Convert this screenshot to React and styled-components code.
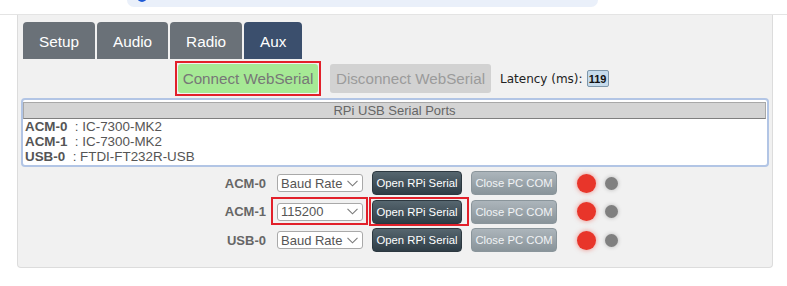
import React from "react";
import styled, { createGlobalStyle, css } from "styled-components";

const Global = createGlobalStyle`
  html, body { margin: 0; padding: 0; background: #ffffff; }
  body { font-family: "Liberation Sans", Arial, Helvetica, sans-serif; }
  * { box-sizing: border-box; }
`;

const TopStrip = styled.div`
  height: 15px;
  border-bottom: 1px solid #e4e4e4;
  display: flex;
`;

const SearchBar = styled.div`
  margin-left: 127px;
  width: 471px;
  height: 7px;
  background: #eaf0fa;
  border-radius: 0 0 14px 14px;
  display: flex;
  overflow: hidden;
`;

const SearchDot = styled.div`
  margin: -8px 0 0 10px;
  width: 10px;
  height: 10px;
  border-radius: 50%;
  background: #1f5bd6;
`;

const Panel = styled.div`
  margin-left: 17px;
  width: 756px;
  height: 253px;
  background: #f1f1f1;
  border: 1px solid #dcdcdc;
  border-top: 0;
  border-radius: 0 0 4px 4px;
  padding: 7px 4px 0 4px;
`;

const Tabs = styled.div`
  display: flex;
  gap: 2px;
  padding-left: 1px;
`;

const Tab = styled.div`
  height: 37px;
  padding: 2px 16px 0;
  display: flex;
  align-items: center;
  font-size: 15.3px;
  color: #ffffff;
  background: ${(p) => (p.$active ? "#3b4f6d" : "#6a7178")};
  border-radius: 4px 4px 0 0;
`;

const ConnectRow = styled.div`
  margin-top: 5px;
  padding-left: 156px;
  display: flex;
  align-items: center;
  height: 29px;
`;

const Annot = styled.span`
  position: relative;
  display: inline-flex;
  &::after {
    content: "";
    position: absolute;
    top: ${(p) => -p.$t}px;
    right: ${(p) => -p.$r}px;
    bottom: ${(p) => -p.$b}px;
    left: ${(p) => -p.$l}px;
    border: 2px solid #e2202a;
    pointer-events: none;
  }
`;

const WebButton = styled.div`
  height: 29px;
  padding: 0 4px;
  display: flex;
  align-items: center;
  justify-content: center;
  font-size: 15.2px;
  border-radius: 3px;
  ${(p) =>
    p.$connect
      ? css`
          width: 140px;
          background: #a6e995;
          color: #777777;
        `
      : css`
          width: 161px;
          background: #d2d2d2;
          color: #9b9b9b;
          margin-left: 12px;
        `}
`;

const Latency = styled.span`
  margin-left: 9px;
  font-family: "DejaVu Sans", Verdana, sans-serif;
  font-size: 12px;
  color: #222;
  display: flex;
  align-items: center;
  gap: 4px;
`;

const LatencyValue = styled.span`
  display: inline-flex;
  align-items: center;
  justify-content: center;
  width: 22px;
  height: 17px;
  background: #c6dbec;
  border: 1px solid #7e97ab;
  border-radius: 2px;
  font-family: "Liberation Sans", Arial, sans-serif;
  font-weight: bold;
  font-size: 11px;
  color: #111;
`;

const PortsBox = styled.div`
  margin: 5px -1px 0;
  height: 69px;
  border: 2px solid #b2c5e5;
  border-radius: 4px;
  background: #ffffff;
  padding: 2px 1px 1px 0;
`;

const PortsHeader = styled.div`
  height: 17px;
  background: #d4d4d4;
  border: 1px solid #a8a8a8;
  border-bottom-color: #7f7f7f;
  text-align: center;
  font-size: 13px;
  line-height: 15px;
  color: #666;
`;

const PortList = styled.div`
  padding-left: 2px;
  font-size: 13.4px;
  line-height: 15px;
  color: #555;
`;

const PortLine = styled.div`
  white-space: pre;
  b { font-weight: bold; }
`;

const Rows = styled.div`
  margin-top: 2px;
  padding-left: 184px;
  display: grid;
  grid-auto-rows: 28.5px;
`;

const Row = styled.div`
  display: flex;
  align-items: center;
`;

const RowLabel = styled.div`
  width: 60px;
  text-align: right;
  font-size: 13px;
  font-weight: bold;
  color: #666;
`;

const SelectBox = styled.div`
  width: 86px;
  height: 18px;
  background: #ffffff;
  border: 1px solid #a9a9a9;
  border-radius: 3px;
  padding: 0 4px 0 3px;
  display: flex;
  align-items: center;
  justify-content: space-between;
  font-size: 13px;
  color: #555;
`;

const SelectWrap = styled.div`
  margin-left: 11px;
  display: flex;
`;

const SerialButton = styled.div`
  height: 24px;
  display: flex;
  align-items: center;
  justify-content: center;
  font-size: 11.3px;
  border-radius: 4px;
  ${(p) =>
    p.$open
      ? css`
          width: 90px;
          background: linear-gradient(#56666f, #2f3d46);
          border: 1px solid #2c3840;
          color: #ffffff;
        `
      : css`
          width: 86px;
          background: linear-gradient(#acb5bb, #89949a);
          border: 1px solid #8a959b;
          color: #f1f3f5;
        `}
`;

const ButtonSlot = styled.div`
  margin-left: 9px;
  display: flex;
`;

const Dot = styled.div`
  border-radius: 50%;
  ${(p) =>
    p.$red
      ? css`
          margin-left: 20px;
          width: 19px;
          height: 19px;
          background: #e8352a;
          box-shadow: 0 0 5px rgba(232, 53, 42, 0.55);
        `
      : css`
          margin-left: 9px;
          width: 13px;
          height: 13px;
          background: #808080;
          box-shadow: 0 0 4px rgba(0, 0, 0, 0.25);
        `}
`;

const Chevron = () => (
  <svg width="11" height="7" viewBox="0 0 11 7" fill="none">
    <path d="M0.5 0.8 L5.5 5.8 L10.5 0.8" stroke="#7a7a7a" strokeWidth="1.1" />
  </svg>
);

const ports = [
  { id: "ACM-0", name: "IC-7300-MK2" },
  { id: "ACM-1", name: "IC-7300-MK2" },
  { id: "USB-0", name: "FTDI-FT232R-USB" },
];

const rows = [
  { id: "ACM-0", baud: "Baud Rate", marked: false },
  { id: "ACM-1", baud: "115200", marked: true },
  { id: "USB-0", baud: "Baud Rate", marked: false },
];

export default function App() {
  return (
    <>
      <Global />
      <TopStrip>
        <SearchBar>
          <SearchDot />
        </SearchBar>
      </TopStrip>
      <Panel>
        <Tabs>
          <Tab>Setup</Tab>
          <Tab>Audio</Tab>
          <Tab>Radio</Tab>
          <Tab $active>Aux</Tab>
        </Tabs>
        <ConnectRow>
          <Annot $t={3} $r={3} $b={3} $l={3}>
            <WebButton $connect>Connect WebSerial</WebButton>
          </Annot>
          <WebButton>Disconnect WebSerial</WebButton>
          <Latency>
            Latency (ms):
            <LatencyValue>119</LatencyValue>
          </Latency>
        </ConnectRow>
        <PortsBox>
          <PortsHeader>RPi USB Serial Ports</PortsHeader>
          <PortList>
            {ports.map((p) => (
              <PortLine key={p.id}>
                <b>{p.id}</b>
                {"  : " + p.name}
              </PortLine>
            ))}
          </PortList>
        </PortsBox>
        <Rows>
          {rows.map((r) => {
            const select = (
              <SelectBox>
                <span>{r.baud}</span>
                <Chevron />
              </SelectBox>
            );
            const open = <SerialButton $open>Open RPi Serial</SerialButton>;
            return (
              <Row key={r.id}>
                <RowLabel>{r.id}</RowLabel>
                <SelectWrap>
                  {r.marked ? (
                    <Annot $t={6} $r={5} $b={4} $l={6}>
                      {select}
                    </Annot>
                  ) : (
                    select
                  )}
                </SelectWrap>
                <ButtonSlot>
                  {r.marked ? (
                    <Annot $t={3} $r={7} $b={2} $l={3}>
                      {open}
                    </Annot>
                  ) : (
                    open
                  )}
                </ButtonSlot>
                <ButtonSlot>
                  <SerialButton>Close PC COM</SerialButton>
                </ButtonSlot>
                <Dot $red />
                <Dot />
              </Row>
            );
          })}
        </Rows>
      </Panel>
    </>
  );
}
